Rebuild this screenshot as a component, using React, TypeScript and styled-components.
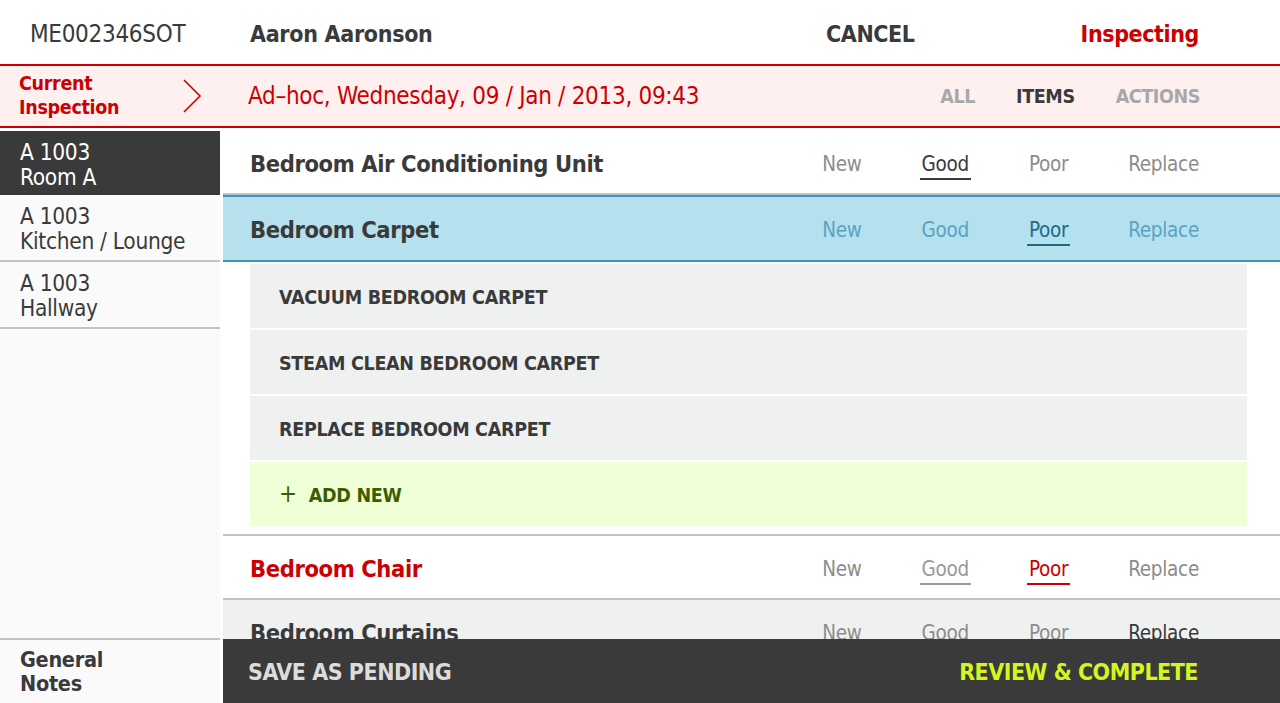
import React from 'react'
import styled, { createGlobalStyle } from 'styled-components'

const GlobalStyle = createGlobalStyle`
  html, body {
    margin: 0;
    padding: 0;
    background: #ffffff;
  }
  body {
    font-family: "Liberation Sans Narrow", "DejaVu Sans Condensed", "Roboto Condensed", Roboto, sans-serif;
    color: #3a3a3a;
  }
  * { box-sizing: border-box; }
`

const Page = styled.div`
  width: 1280px;
  height: 703px;
  display: flex;
  flex-direction: column;
  overflow: hidden;
`

const Header = styled.div`
  height: 64px;
  display: flex;
  align-items: center;
  padding-top: 4px;
  white-space: nowrap;
`

const OrderNo = styled.div`
  width: 223px;
  padding-left: 30px;
  font-size: 24px;
  letter-spacing: -0.3px;
  color: #3a3a3a;
`

const Tenant = styled.div`
  flex: 1;
  padding-left: 27px;
  font-size: 23px;
  font-weight: bold;
  letter-spacing: -0.3px;
`

const Cancel = styled.div`
  font-size: 23px;
  font-weight: bold;
  letter-spacing: -0.4px;
`

const Status = styled.div`
  margin-left: 166px;
  margin-right: 81px;
  font-size: 23px;
  font-weight: bold;
  letter-spacing: -0.4px;
  color: #cc0000;
`

const Band = styled.div`
  height: 64px;
  background: #fff0f0;
  border-top: 2px solid #cc0000;
  border-bottom: 2px solid #cc0000;
  display: flex;
  align-items: center;
  white-space: nowrap;
`

const BandLabel = styled.div`
  width: 223px;
  padding-left: 19px;
  padding-right: 21px;
  display: flex;
  align-items: center;
  justify-content: space-between;
  color: #cc0000;
  font-size: 19.5px;
  font-weight: bold;
  line-height: 24px;
  letter-spacing: -0.3px;
`

const Session = styled.div`
  flex: 1;
  padding-left: 25px;
  font-size: 24px;
  letter-spacing: -0.3px;
  color: #cc0000;
`

const Tabs = styled.div`
  display: flex;
  gap: 41px;
  padding-right: 80px;
`

const Tab = styled.div<{ active?: boolean }>`
  font-size: 19.5px;
  font-weight: bold;
  letter-spacing: -0.4px;
  color: ${(p) => (p.active ? '#3a3a3a' : '#a8a8a8')};
`

const Body = styled.div`
  flex: 1;
  min-height: 0;
  display: flex;
  gap: 3px;
  padding-top: 3px;
`

const Sidebar = styled.div`
  width: 220px;
  background: #fafafa;
  display: flex;
  flex-direction: column;
  white-space: nowrap;
`

const Room = styled.div<{ active?: boolean }>`
  height: ${(p) => (p.active ? 64 : 67)}px;
  padding: 9px 20px 0;
  font-size: 22.5px;
  line-height: 24.5px;
  letter-spacing: -0.3px;
  background: ${(p) => (p.active ? '#3a3a3a' : 'transparent')};
  color: ${(p) => (p.active ? '#ffffff' : '#3a3a3a')};
  border-bottom: ${(p) => (p.active ? 'none' : '2px solid #c0c4c8')};
`

const Notes = styled.div`
  margin-top: auto;
  height: 65px;
  border-top: 2px solid #c0c4c8;
  padding: 8px 20px 0;
  font-size: 21.5px;
  line-height: 24px;
  letter-spacing: -0.3px;
  font-weight: bold;
`

const Main = styled.div`
  flex: 1;
  display: flex;
  flex-direction: column;
  min-width: 0;
`

const List = styled.div`
  flex: 1;
  min-height: 0;
  overflow: hidden;
`

const ItemRow = styled.div<{ tone?: 'plain' | 'open' | 'grey' }>`
  height: ${(p) => (p.tone === 'open' ? 67 : 64)}px;
  display: flex;
  align-items: center;
  padding: 3px 79px 0 27px;
  white-space: nowrap;
  background: ${(p) => (p.tone === 'open' ? '#b5e0ee' : p.tone === 'grey' ? '#eff1f0' : '#ffffff')};
  border-top: ${(p) => (p.tone === 'open' ? '2px solid #3a96bb' : 'none')};
  border-bottom: 2px solid ${(p) => (p.tone === 'open' ? '#3a96bb' : '#c0c4c8')};
`

const ItemName = styled.div<{ flagged?: boolean }>`
  flex: 1;
  font-size: 23.5px;
  font-weight: bold;
  letter-spacing: -0.4px;
  color: ${(p) => (p.flagged ? '#cc0000' : '#3a3a3a')};
`

const Conditions = styled.div`
  display: flex;
  gap: 56px;
`

const Condition = styled.div<{ color: string; line?: string }>`
  padding: 0 2px 2px;
  font-size: 20.5px;
  letter-spacing: -0.3px;
  color: ${(p) => p.color};
  border-bottom: 2px solid ${(p) => p.line || 'transparent'};
  margin-bottom: -4px;
`

const Actions = styled.div`
  display: flex;
  flex-direction: column;
  gap: 2px;
  padding: 2px 33px 8px 27px;
  border-bottom: 2px solid #c0c4c8;
`

const Action = styled.div<{ add?: boolean }>`
  height: 64px;
  display: flex;
  align-items: center;
  gap: 12px;
  padding: 2px 0 0 29px;
  background: ${(p) => (p.add ? '#efffd6' : '#eff1f0')};
  color: ${(p) => (p.add ? '#3d5c00' : '#3a3a3a')};
  font-size: 19.5px;
  font-weight: bold;
  letter-spacing: -0.3px;
`

const Plus = styled.span`
  font-size: 24px;
  font-weight: normal;
  margin-top: -3px;
`

const Footer = styled.div`
  height: 64px;
  background: #3a3a3a;
  display: flex;
  align-items: center;
  justify-content: space-between;
  padding: 2px 82px 0 25px;
  font-size: 23px;
  font-weight: bold;
  letter-spacing: -0.5px;
  white-space: nowrap;
`

const FooterButton = styled.div<{ color: string }>`
  color: ${(p) => p.color};
`

type Tone = 'plain' | 'open' | 'grey'

const grey = '#8c8c8c'
const blue = '#5aa3c2'

const items: { name: string; tone: Tone; flagged?: boolean; states: { label: string; color: string; line?: string }[] }[] = [
  {
    name: 'Bedroom Air Conditioning Unit',
    tone: 'plain',
    states: [
      { label: 'New', color: grey },
      { label: 'Good', color: '#3a3a3a', line: '#3a3a3a' },
      { label: 'Poor', color: grey },
      { label: 'Replace', color: grey },
    ],
  },
  {
    name: 'Bedroom Carpet',
    tone: 'open',
    states: [
      { label: 'New', color: blue },
      { label: 'Good', color: blue },
      { label: 'Poor', color: '#1f6a8a', line: '#1f6a8a' },
      { label: 'Replace', color: blue },
    ],
  },
  {
    name: 'Bedroom Chair',
    tone: 'plain',
    flagged: true,
    states: [
      { label: 'New', color: grey },
      { label: 'Good', color: '#9a9a9a', line: '#9a9a9a' },
      { label: 'Poor', color: '#cc0000', line: '#cc0000' },
      { label: 'Replace', color: grey },
    ],
  },
  {
    name: 'Bedroom Curtains',
    tone: 'grey',
    states: [
      { label: 'New', color: grey },
      { label: 'Good', color: grey },
      { label: 'Poor', color: grey },
      { label: 'Replace', color: '#3a3a3a' },
    ],
  },
]

const actions = ['VACUUM BEDROOM CARPET', 'STEAM CLEAN BEDROOM CARPET', 'REPLACE BEDROOM CARPET']

function Chevron() {
  return (
    <svg width="20" height="34" viewBox="0 0 20 34">
      <polyline points="2,1 18,17 2,33" fill="none" stroke="#cc0000" strokeWidth="1.6" />
    </svg>
  )
}

export default function App() {
  return (
    <Page>
      <GlobalStyle />
      <Header>
        <OrderNo>ME002346SOT</OrderNo>
        <Tenant>Aaron Aaronson</Tenant>
        <Cancel>CANCEL</Cancel>
        <Status>Inspecting</Status>
      </Header>
      <Band>
        <BandLabel>
          <div>Current<br />Inspection</div>
          <Chevron />
        </BandLabel>
        <Session>Ad–hoc, Wednesday, 09 / Jan / 2013, 09:43</Session>
        <Tabs>
          <Tab>ALL</Tab>
          <Tab active>ITEMS</Tab>
          <Tab>ACTIONS</Tab>
        </Tabs>
      </Band>
      <Body>
        <Sidebar>
          <Room active>A 1003<br />Room A</Room>
          <Room>A 1003<br />Kitchen / Lounge</Room>
          <Room>A 1003<br />Hallway</Room>
          <Notes>General<br />Notes</Notes>
        </Sidebar>
        <Main>
          <List>
            {items.map((item) => (
              <React.Fragment key={item.name}>
                <ItemRow tone={item.tone}>
                  <ItemName flagged={item.flagged}>{item.name}</ItemName>
                  <Conditions>
                    {item.states.map((s) => (
                      <Condition key={s.label} color={s.color} line={s.line}>
                        {s.label}
                      </Condition>
                    ))}
                  </Conditions>
                </ItemRow>
                {item.tone === 'open' && (
                  <Actions>
                    {actions.map((a) => (
                      <Action key={a}>{a}</Action>
                    ))}
                    <Action add>
                      <Plus>+</Plus>ADD NEW
                    </Action>
                  </Actions>
                )}
              </React.Fragment>
            ))}
          </List>
          <Footer>
            <FooterButton color="#dcdcdc">SAVE AS PENDING</FooterButton>
            <FooterButton color="#d4f520">REVIEW &amp; COMPLETE</FooterButton>
          </Footer>
        </Main>
      </Body>
    </Page>
  )
}
